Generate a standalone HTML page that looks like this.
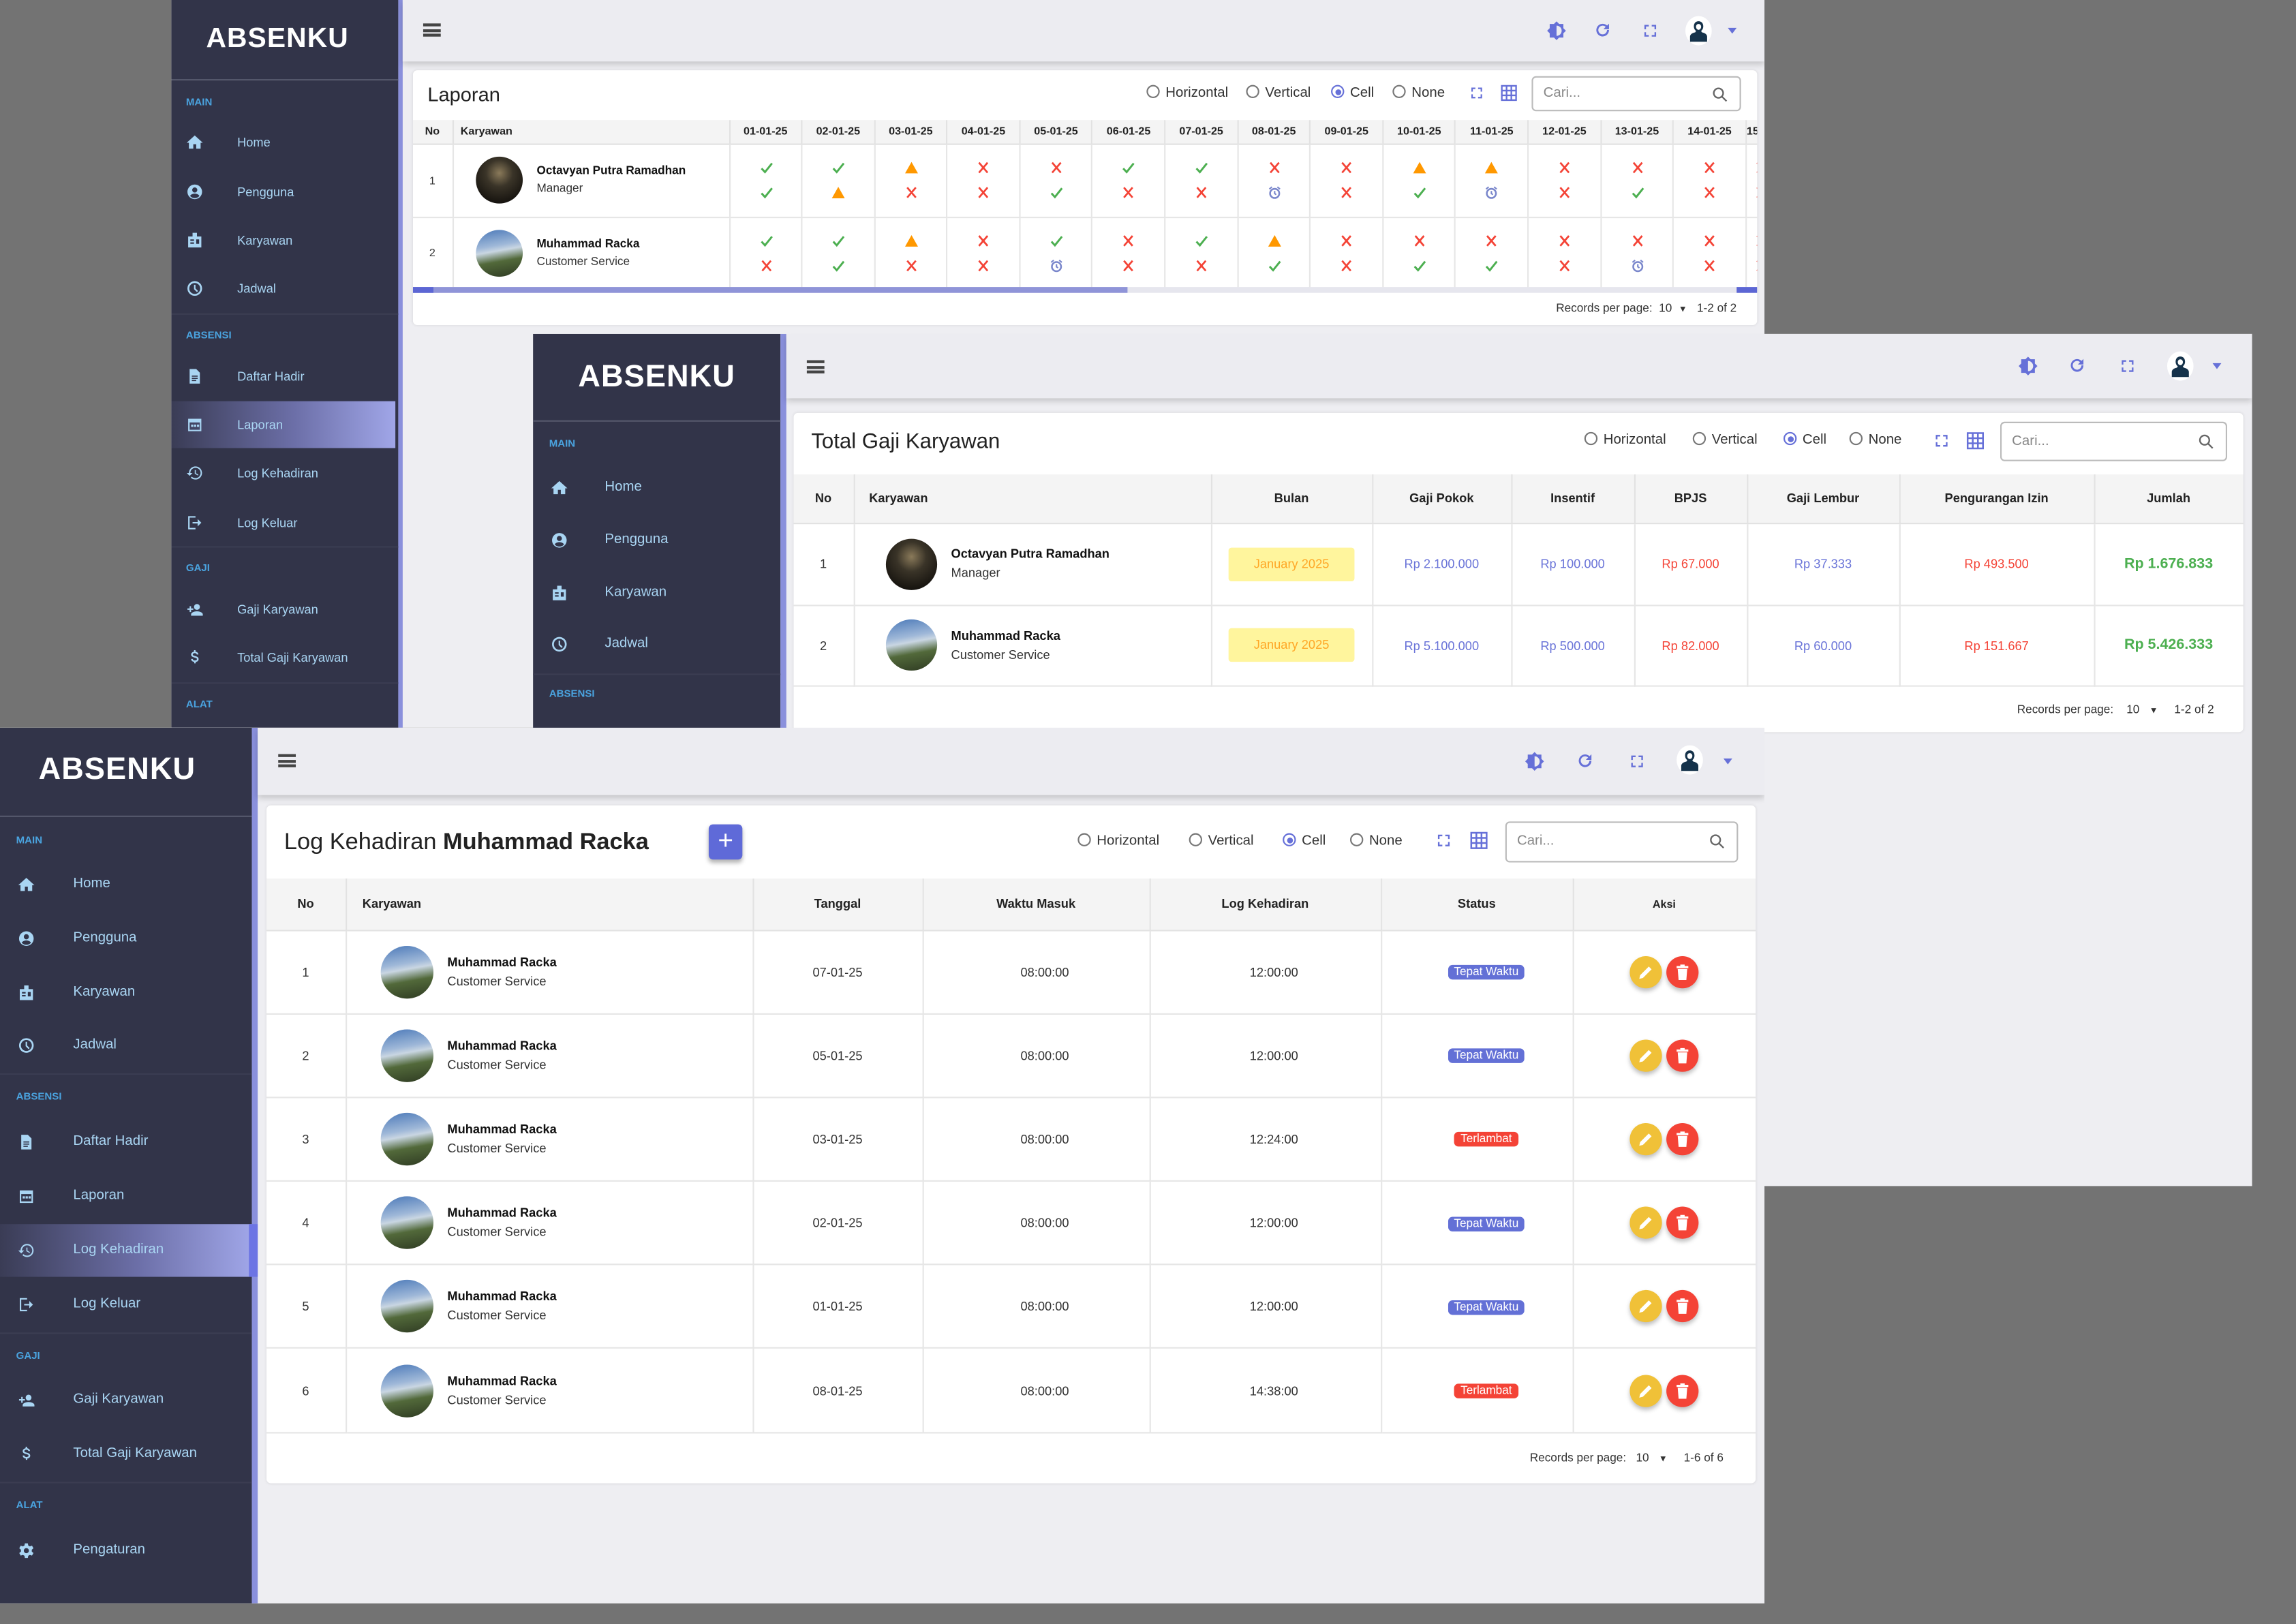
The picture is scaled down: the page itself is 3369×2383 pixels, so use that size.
<!DOCTYPE html>
<html><head><meta charset="utf-8">
<style>
*{box-sizing:border-box;margin:0;padding:0}
html,body{width:3369px;height:2382px;overflow:hidden;background:#737373}
#w{position:absolute;left:0;top:0;width:1568px;height:1109px;transform:scale(2.14860);transform-origin:0 0;font-family:"Liberation Sans",sans-serif;color:#222}
.scr{position:absolute;overflow:hidden;background:#eeeef2}
.sb{position:absolute;left:0;top:0;bottom:0;background:#323449}
.sbb{position:absolute;top:0;bottom:0;width:4px;background:#8a90dc}
.logo{position:absolute;left:0;text-align:center;color:#fff;font-weight:bold;letter-spacing:.5px}
.dv{position:absolute;left:0;height:1px;background:#55586c}
.sec{position:absolute;color:#4aa3df;font-size:7px;font-weight:bold}
.it{position:absolute;left:0;height:16px;line-height:16px;color:#a9d5f3;white-space:nowrap}
.it svg{position:absolute;top:2px;width:12px;height:12px;fill:#a9d5f3}
.act{position:absolute;left:0;background:linear-gradient(90deg,#3a3c55,#6c6fa8 55%,#a0a6e8)}
.tb{position:absolute;top:0;right:0;background:#ececf1;box-shadow:0 2px 4px rgba(0,0,0,.18)}
.hb{position:absolute;width:12px;height:9px;border-top:2px solid #444;border-bottom:2px solid #444}
.hb:after{content:"";position:absolute;left:0;right:0;top:1.5px;height:2px;background:#444}
.ic{position:absolute;width:14px;height:14px;fill:#6670d8;color:#6670d8}
.av{position:absolute;width:18px;height:20px;border-radius:50%;background:#fff;overflow:hidden}
.car{position:absolute;width:0;height:0;border-left:3.5px solid transparent;border-right:3.5px solid transparent;border-top:4px solid #6670d8}
.card{position:absolute;background:#fff;border-radius:3px;overflow:hidden;box-shadow:0 0 2px rgba(0,0,0,.1)}
.ttl{position:absolute;color:#222;white-space:nowrap}
.rd{position:absolute;font-size:9.5px;color:#333;white-space:nowrap;line-height:12px}
.rd b{display:inline-block;width:9px;height:9px;border:1px solid #777;border-radius:50%;vertical-align:-1px;margin-right:4px;position:relative}
.rd b.on{border-color:#6670d8}
.rd b.on:after{content:"";position:absolute;left:1.5px;top:1.5px;width:4px;height:4px;border-radius:50%;background:#6670d8}
.srch{position:absolute;border:1px solid #bbb;border-radius:3px;font-size:9.5px;color:#888;padding-left:7px}
.srch svg{position:absolute;right:8px;width:11px;height:11px;fill:none;stroke:#666;stroke-width:2.4}
table{position:absolute;left:0;border-collapse:collapse;table-layout:fixed}
th{background:#f4f4f4;font-weight:bold;color:#222;border:1px solid #e2e2e2;border-top:none;white-space:nowrap;overflow:hidden}
td{border:1px solid #e6e6e6;white-space:nowrap;overflow:hidden;color:#333}
tr>*:first-child{border-left:none}
.emp{display:flex;align-items:center}
.pic{border-radius:50%;flex:none}
.p1{background:radial-gradient(circle at 50% 35%,#8a7a5a 0,#3a3428 35%,#15120e 80%)}
.p2{background:linear-gradient(170deg,#4a78b8 0,#9fb8d8 35%,#c9d6e2 45%,#52693a 65%,#2e3a22 100%)}
.nm{font-weight:bold;color:#111}
.ft{position:absolute;right:14px;font-size:8px;color:#333;white-space:nowrap}
.m{display:block;height:17px;line-height:17px;text-align:center}
.ylw{display:inline-block;background:#fff59d;color:#ffa726;border-radius:2px;width:86px;height:23px;line-height:23px;text-align:center;font-size:8.5px}
.bd{display:inline-block;color:#fff;border-radius:3px;font-size:8px;padding:0 4px;line-height:10px}
.btn{display:inline-block;width:22px;height:22px;border-radius:50%;vertical-align:middle;box-shadow:0 2px 3px rgba(0,0,0,.25);position:relative}
.btn svg{position:absolute;left:5px;top:5px;width:12px;height:12px;fill:#fff}
</style></head><body><div id="w">
<svg width="0" height="0" style="position:absolute">
<defs>
<symbol id="home" viewBox="0 0 24 24"><path d="M12 3L1 13h3v8h6v-6h4v6h6v-8h3z"/></symbol>
<symbol id="user" viewBox="0 0 24 24"><path fill-rule="evenodd" d="M12 2a10 10 0 100 20 10 10 0 000-20zm0 4a3.5 3.5 0 110 7 3.5 3.5 0 010-7zm0 14.5a8.5 8.5 0 01-6.3-2.8c.6-2 4-3.2 6.3-3.2s5.7 1.2 6.3 3.2a8.5 8.5 0 01-6.3 2.8z"/></symbol>
<symbol id="badge" viewBox="0 0 24 24"><path fill-rule="evenodd" d="M9 2h6v5h6v15H3V7h6zM6 11h5v2H6zm0 4h5v2H6zm8-4h4v6h-4z"/></symbol>
<symbol id="clock" viewBox="0 0 24 24"><path fill-rule="evenodd" d="M12 2a10 10 0 100 20 10 10 0 000-20zm0 2.5a7.5 7.5 0 110 15 7.5 7.5 0 010-15zM11 7h2v5l3.5 3.5-1.5 1.5-4-4z"/></symbol>
<symbol id="doc" viewBox="0 0 24 24"><path fill-rule="evenodd" d="M5 2h9l5 5v15H5zm3 9h8v1.5H8zm0 3h8v1.5H8zm0 3h6v1.5H8z"/></symbol>
<symbol id="cal" viewBox="0 0 24 24"><path fill-rule="evenodd" d="M3 4h18v17H3zm2 5v10h14V9zm2 3h3v3H7zm4 0h3v3h-3zm4 0h3v3h-3z"/></symbol>
<symbol id="hist" viewBox="0 0 24 24"><path d="M13 3a9 9 0 00-9 9H1l4 4 4-4H6a7 7 0 117 7 7 7 0 01-5-2l-1.4 1.4A9 9 0 1013 3zm-1 5v5l4.3 2.5.7-1.2-3.5-2.1V8z"/></symbol>
<symbol id="out" viewBox="0 0 24 24"><path d="M3 3h10v2H5v14h8v2H3zm13 4l5 5-5 5v-4H9v-2h7z"/></symbol>
<symbol id="uadd" viewBox="0 0 24 24"><path d="M15 5a4 4 0 110 8 4 4 0 010-8zm0 10c3 0 8 1.5 8 4v2H7v-2c0-2.5 5-4 8-4zM5 8h2v3h3v2H7v3H5v-3H2v-2h3z"/></symbol>
<symbol id="dol" viewBox="0 0 24 24"><path d="M11 2h2v2.1c2.3.3 4 1.8 4 3.9h-2.3c0-1.1-1.2-1.900-2.7-1.9s-2.7.8-2.7 1.9c0 1.2 1 1.6 3.3 2.2 2.8.7 4.7 1.6 4.7 4.2 0 2.1-1.7 3.4-4 3.8V20h-2v-1.9c-2.4-.3-4.3-1.8-4.3-4.1h2.3c0 1.3 1.3 2.1 3 2.1s2.7-.7 2.7-1.800c0-1.2-1-1.6-3.4-2.2C8.9 11.4 7 10.5 7 8c0-2 1.7-3.5 4-3.9z"/></symbol>
<symbol id="gear" viewBox="0 0 24 24"><path fill-rule="evenodd" d="M10 2h4l.6 3 2.2 1.2 2.9-1 2 3.5-2.3 2v2.6l2.3 2-2 3.5-2.9-1-2.2 1.2L14 22h-4l-.6-3-2.2-1.2-2.9 1-2-3.5 2.3-2v-2.6l-2.3-2 2-3.5 2.9 1L9.4 5zM12 8.5a3.5 3.5 0 100 7 3.5 3.5 0 000-7z"/></symbol>
<symbol id="bright" viewBox="0 0 24 24"><path d="M12 1l3 3h5v5l3 3-3 3v5h-5l-3 3-3-3H4v-5l-3-3 3-3V4h5zm0 5v12a6 6 0 000-12z"/></symbol>
<symbol id="ref" viewBox="0 0 24 24"><path d="M17.6 6.4A8 8 0 1020 12h-2.5a5.5 5.5 0 11-1.7-4L13 11h7V4z"/></symbol>
<symbol id="fs" viewBox="0 0 24 24"><path d="M4 4h6v2.2H6.2V10H4zm10 0h6v6h-2.2V6.2H14zM4 14h2.2v3.8H10V20H4zm13.8 0H20v6h-6v-2.2h3.8z"/></symbol>
<symbol id="grid" viewBox="0 0 24 24"><path fill-rule="evenodd" d="M2 2h20v20H2zm2 2v4h4V4zm6 0v4h4V4zm6 0v4h4V4zM4 10v4h4v-4zm6 0v4h4v-4zm6 0v4h4v-4zM4 16v4h4v-4zm6 0v4h4v-4zm6 0v4h4v-4z"/></symbol>
<symbol id="usr" viewBox="0 0 24 28"><path d="M12 2c-3.5 0-5.5 2.6-5.5 6 0 2.4 1 4.3 2.6 5.4L8 15c-3.5.6-6 2.6-6 5v6h20v-6c0-2.4-2.5-4.4-6-5l-1.1-1.6C16.5 12.3 17.5 10.4 17.5 8c0-3.4-2-6-5.5-6z" fill="#15324a"/><path d="M9 8.5c0-2 1.4-3.3 3-3.3s3 1.3 3 3.3-1.4 3.6-3 3.6-3-1.6-3-3.6z" fill="#fff"/></symbol>
<symbol id="x" viewBox="0 0 10 10"><path d="M2 1.5l6 7M8 1.5l-6 7" stroke="#f44336" stroke-width="1.3" fill="none"/></symbol>
<symbol id="v" viewBox="0 0 10 10"><path d="M1.5 5.5l2.4 2.6L8.8 2" stroke="#4caf50" stroke-width="1.4" fill="none"/></symbol>
<symbol id="wn" viewBox="0 0 10 10"><path d="M5 1L9.5 9H.5z" fill="#ff9800"/></symbol>
<symbol id="a" viewBox="0 0 10 10"><circle cx="5" cy="5.6" r="3.2" fill="none" stroke="#7986cb" stroke-width="1.2"/><path d="M5 3.9v1.8l1.1.8M1.3 2.6l1.8-1.5M8.7 2.6L6.9 1.1" stroke="#7986cb" stroke-width="1" fill="none"/></symbol>
<symbol id="srch" viewBox="0 0 24 24"><circle cx="10" cy="10" r="7"/><path d="M15 15l7 7"/></symbol>
<symbol id="pen" viewBox="0 0 24 24"><path d="M3 21l1.2-5L16 4.2l3.8 3.8L8 19.8z"/></symbol>
<symbol id="trash" viewBox="0 0 24 24"><path d="M4 3.5h16v3H4zM9 1.5h6v2H9zM5.5 7.5h13l-1.2 15H6.7z"/></symbol>
</defs></svg>

<!-- ================= SCREEN A ================= -->
<div class="scr" style="left:117px;top:0;width:1088px;height:497px">
 <div class="sb" style="width:155px"></div>
 <div class="sbb" style="left:155px;width:3px"></div>
 <div class="logo" style="width:145px;top:14px;font-size:19px;line-height:26px">ABSENKU</div>
 <div class="dv" style="top:54px;width:155px"></div>
 <div class="sec" style="left:10px;top:67px">MAIN</div>
 <div class="act" style="top:274px;width:153px;height:32px"></div>
 <div style="font-size:8.5px">
 <div class="it" style="top:89px"><svg style="left:10px"><use href="#home"/></svg><span style="position:absolute;left:45px">Home</span></div>
 <div class="it" style="top:123px"><svg style="left:10px"><use href="#user"/></svg><span style="position:absolute;left:45px">Pengguna</span></div>
 <div class="it" style="top:156px"><svg style="left:10px"><use href="#badge"/></svg><span style="position:absolute;left:45px">Karyawan</span></div>
 <div class="it" style="top:189px"><svg style="left:10px"><use href="#clock"/></svg><span style="position:absolute;left:45px">Jadwal</span></div>
 <div class="it" style="top:249px"><svg style="left:10px"><use href="#doc"/></svg><span style="position:absolute;left:45px">Daftar Hadir</span></div>
 <div class="it" style="top:282px"><svg style="left:10px"><use href="#cal"/></svg><span style="position:absolute;left:45px">Laporan</span></div>
 <div class="it" style="top:315px"><svg style="left:10px"><use href="#hist"/></svg><span style="position:absolute;left:45px">Log Kehadiran</span></div>
 <div class="it" style="top:349px"><svg style="left:10px"><use href="#out"/></svg><span style="position:absolute;left:45px">Log Keluar</span></div>
 <div class="it" style="top:408px"><svg style="left:10px"><use href="#uadd"/></svg><span style="position:absolute;left:45px">Gaji Karyawan</span></div>
 <div class="it" style="top:441px"><svg style="left:10px"><use href="#dol"/></svg><span style="position:absolute;left:45px">Total Gaji Karyawan</span></div>
 </div>
 <div class="dv" style="top:214px;width:155px;background:#3b3d52"></div>
 <div class="sec" style="left:10px;top:226px">ABSENSI</div>
 <div class="dv" style="top:373px;width:155px;background:#3b3d52"></div>
 <div class="sec" style="left:10px;top:385px">GAJI</div>
 <div class="dv" style="top:466px;width:155px;background:#3b3d52"></div>
 <div class="sec" style="left:10px;top:478px">ALAT</div>

 <div class="tb" style="left:158px;height:42px"></div>
 <div class="hb" style="left:172px;top:16px"></div>
 <svg class="ic" style="left:939px;top:14px"><use href="#bright"/></svg>
 <svg class="ic" style="left:971px;top:14px;width:13px;height:13px"><use href="#ref"/></svg>
 <svg class="ic" style="left:1004px;top:15px;width:12px;height:12px"><use href="#fs"/></svg>
 <div class="av" style="left:1034px;top:11px"><svg style="position:absolute;left:2px;top:2px;width:14px;height:17px"><use href="#usr"/></svg></div>
 <div class="car" style="left:1063px;top:19px"></div>

 <div class="card" style="left:165px;top:48px;width:918px;height:174px">
  <div class="ttl" style="left:10px;top:9px;font-size:13.5px">Laporan</div>
  <div class="rd" style="left:501px;top:10px"><b></b>Horizontal</div>
  <div class="rd" style="left:569px;top:10px"><b></b>Vertical</div>
  <div class="rd" style="left:627px;top:10px"><b class="on"></b>Cell</div>
  <div class="rd" style="left:669px;top:10px"><b></b>None</div>
  <svg class="ic" style="left:721px;top:10px;width:11px;height:11px"><use href="#fs"/></svg>
  <svg class="ic" style="left:742px;top:9px;width:13px;height:13px"><use href="#grid"/></svg>
  <div class="srch" style="left:764px;top:4px;width:143px;height:24px;line-height:22px">Cari...<svg style="top:6px"><use href="#srch"/></svg></div>
  <table style="top:34px;width:1000px;font-size:7.5px">
   <colgroup><col style="width:27px"><col style="width:189px"><col span="16" style="width:49.6px"></colgroup>
   <tr style="height:16px"><th>No</th><th style="text-align:left;padding-left:5px">Karyawan</th><th>01-01-25</th><th>02-01-25</th><th>03-01-25</th><th>04-01-25</th><th>05-01-25</th><th>06-01-25</th><th>07-01-25</th><th>08-01-25</th><th>09-01-25</th><th>10-01-25</th><th>11-01-25</th><th>12-01-25</th><th>13-01-25</th><th>14-01-25</th><th style="text-align:left">15-01-25</th><th></th></tr>
   <tr style="height:50px"><td style="text-align:center">1</td><td><div class="emp" style="padding-left:15px"><div class="pic p1" style="width:32px;height:32px"></div><div style="margin-left:10px;line-height:12px"><div class="nm" style="font-size:8px">Octavyan Putra Ramadhan</div><div style="font-size:8px">Manager</div></div></div></td>
    <td><svg class="m" width="49" height="17" viewBox="-20 -3 50 16"><use href="#v" width="10" height="10"/></svg><svg class="m" width="49" height="17" viewBox="-20 -3 50 16"><use href="#v" width="10" height="10"/></svg></td>
    <td><svg class="m" width="49" height="17" viewBox="-20 -3 50 16"><use href="#v" width="10" height="10"/></svg><svg class="m" width="49" height="17" viewBox="-20 -3 50 16"><use href="#wn" width="10" height="10"/></svg></td>
    <td><svg class="m" width="49" height="17" viewBox="-20 -3 50 16"><use href="#wn" width="10" height="10"/></svg><svg class="m" width="49" height="17" viewBox="-20 -3 50 16"><use href="#x" width="10" height="10"/></svg></td>
    <td><svg class="m" width="49" height="17" viewBox="-20 -3 50 16"><use href="#x" width="10" height="10"/></svg><svg class="m" width="49" height="17" viewBox="-20 -3 50 16"><use href="#x" width="10" height="10"/></svg></td>
    <td><svg class="m" width="49" height="17" viewBox="-20 -3 50 16"><use href="#x" width="10" height="10"/></svg><svg class="m" width="49" height="17" viewBox="-20 -3 50 16"><use href="#v" width="10" height="10"/></svg></td>
    <td><svg class="m" width="49" height="17" viewBox="-20 -3 50 16"><use href="#v" width="10" height="10"/></svg><svg class="m" width="49" height="17" viewBox="-20 -3 50 16"><use href="#x" width="10" height="10"/></svg></td>
    <td><svg class="m" width="49" height="17" viewBox="-20 -3 50 16"><use href="#v" width="10" height="10"/></svg><svg class="m" width="49" height="17" viewBox="-20 -3 50 16"><use href="#x" width="10" height="10"/></svg></td>
    <td><svg class="m" width="49" height="17" viewBox="-20 -3 50 16"><use href="#x" width="10" height="10"/></svg><svg class="m" width="49" height="17" viewBox="-20 -3 50 16"><use href="#a" width="10" height="10"/></svg></td>
    <td><svg class="m" width="49" height="17" viewBox="-20 -3 50 16"><use href="#x" width="10" height="10"/></svg><svg class="m" width="49" height="17" viewBox="-20 -3 50 16"><use href="#x" width="10" height="10"/></svg></td>
    <td><svg class="m" width="49" height="17" viewBox="-20 -3 50 16"><use href="#wn" width="10" height="10"/></svg><svg class="m" width="49" height="17" viewBox="-20 -3 50 16"><use href="#v" width="10" height="10"/></svg></td>
    <td><svg class="m" width="49" height="17" viewBox="-20 -3 50 16"><use href="#wn" width="10" height="10"/></svg><svg class="m" width="49" height="17" viewBox="-20 -3 50 16"><use href="#a" width="10" height="10"/></svg></td>
    <td><svg class="m" width="49" height="17" viewBox="-20 -3 50 16"><use href="#x" width="10" height="10"/></svg><svg class="m" width="49" height="17" viewBox="-20 -3 50 16"><use href="#x" width="10" height="10"/></svg></td>
    <td><svg class="m" width="49" height="17" viewBox="-20 -3 50 16"><use href="#x" width="10" height="10"/></svg><svg class="m" width="49" height="17" viewBox="-20 -3 50 16"><use href="#v" width="10" height="10"/></svg></td>
    <td><svg class="m" width="49" height="17" viewBox="-20 -3 50 16"><use href="#x" width="10" height="10"/></svg><svg class="m" width="49" height="17" viewBox="-20 -3 50 16"><use href="#x" width="10" height="10"/></svg></td>
    <td><svg class="m" width="20" height="17" viewBox="-5 -3 20 16"><use href="#x" width="10" height="10"/></svg><svg class="m" width="20" height="17" viewBox="-5 -3 20 16"><use href="#x" width="10" height="10"/></svg></td><td></td></tr>
   <tr style="height:49px"><td style="text-align:center">2</td><td><div class="emp" style="padding-left:15px"><div class="pic p2" style="width:32px;height:32px"></div><div style="margin-left:10px;line-height:12px"><div class="nm" style="font-size:8px">Muhammad Racka</div><div style="font-size:8px">Customer Service</div></div></div></td>
    <td><svg class="m" width="49" height="17" viewBox="-20 -3 50 16"><use href="#v" width="10" height="10"/></svg><svg class="m" width="49" height="17" viewBox="-20 -3 50 16"><use href="#x" width="10" height="10"/></svg></td>
    <td><svg class="m" width="49" height="17" viewBox="-20 -3 50 16"><use href="#v" width="10" height="10"/></svg><svg class="m" width="49" height="17" viewBox="-20 -3 50 16"><use href="#v" width="10" height="10"/></svg></td>
    <td><svg class="m" width="49" height="17" viewBox="-20 -3 50 16"><use href="#wn" width="10" height="10"/></svg><svg class="m" width="49" height="17" viewBox="-20 -3 50 16"><use href="#x" width="10" height="10"/></svg></td>
    <td><svg class="m" width="49" height="17" viewBox="-20 -3 50 16"><use href="#x" width="10" height="10"/></svg><svg class="m" width="49" height="17" viewBox="-20 -3 50 16"><use href="#x" width="10" height="10"/></svg></td>
    <td><svg class="m" width="49" height="17" viewBox="-20 -3 50 16"><use href="#v" width="10" height="10"/></svg><svg class="m" width="49" height="17" viewBox="-20 -3 50 16"><use href="#a" width="10" height="10"/></svg></td>
    <td><svg class="m" width="49" height="17" viewBox="-20 -3 50 16"><use href="#x" width="10" height="10"/></svg><svg class="m" width="49" height="17" viewBox="-20 -3 50 16"><use href="#x" width="10" height="10"/></svg></td>
    <td><svg class="m" width="49" height="17" viewBox="-20 -3 50 16"><use href="#v" width="10" height="10"/></svg><svg class="m" width="49" height="17" viewBox="-20 -3 50 16"><use href="#x" width="10" height="10"/></svg></td>
    <td><svg class="m" width="49" height="17" viewBox="-20 -3 50 16"><use href="#wn" width="10" height="10"/></svg><svg class="m" width="49" height="17" viewBox="-20 -3 50 16"><use href="#v" width="10" height="10"/></svg></td>
    <td><svg class="m" width="49" height="17" viewBox="-20 -3 50 16"><use href="#x" width="10" height="10"/></svg><svg class="m" width="49" height="17" viewBox="-20 -3 50 16"><use href="#x" width="10" height="10"/></svg></td>
    <td><svg class="m" width="49" height="17" viewBox="-20 -3 50 16"><use href="#x" width="10" height="10"/></svg><svg class="m" width="49" height="17" viewBox="-20 -3 50 16"><use href="#v" width="10" height="10"/></svg></td>
    <td><svg class="m" width="49" height="17" viewBox="-20 -3 50 16"><use href="#x" width="10" height="10"/></svg><svg class="m" width="49" height="17" viewBox="-20 -3 50 16"><use href="#v" width="10" height="10"/></svg></td>
    <td><svg class="m" width="49" height="17" viewBox="-20 -3 50 16"><use href="#x" width="10" height="10"/></svg><svg class="m" width="49" height="17" viewBox="-20 -3 50 16"><use href="#x" width="10" height="10"/></svg></td>
    <td><svg class="m" width="49" height="17" viewBox="-20 -3 50 16"><use href="#x" width="10" height="10"/></svg><svg class="m" width="49" height="17" viewBox="-20 -3 50 16"><use href="#a" width="10" height="10"/></svg></td>
    <td><svg class="m" width="49" height="17" viewBox="-20 -3 50 16"><use href="#x" width="10" height="10"/></svg><svg class="m" width="49" height="17" viewBox="-20 -3 50 16"><use href="#x" width="10" height="10"/></svg></td>
    <td><svg class="m" width="20" height="17" viewBox="-5 -3 20 16"><use href="#x" width="10" height="10"/></svg><svg class="m" width="20" height="17" viewBox="-5 -3 20 16"><use href="#x" width="10" height="10"/></svg></td><td></td></tr>
  </table>
  <div style="position:absolute;left:0;top:148px;width:918px;height:4px;background:#e6e6ee"></div>
  <div style="position:absolute;left:0;top:148px;width:488px;height:4px;background:#8f94d8"></div>
  <div style="position:absolute;left:0;top:148px;width:14px;height:4px;background:#5c66d4"></div>
  <div style="position:absolute;left:904px;top:148px;width:14px;height:4px;background:#5c66d4"></div>
  <div class="ft" style="top:158px">Records per page:&nbsp;&nbsp;10&nbsp;&nbsp;<span style="font-size:6px">▼</span>&nbsp;&nbsp;&nbsp;1-2 of 2</div>
 </div>
</div>

<!-- ================= SCREEN B ================= -->
<div class="scr" style="left:364px;top:228px;width:1174px;height:582px">
 <div class="sb" style="width:169px"></div>
 <div class="sbb" style="left:169px"></div>
 <div class="logo" style="width:169px;top:16px;font-size:21px;line-height:28px">ABSENKU</div>
 <div class="dv" style="top:59px;width:169px"></div>
 <div class="sec" style="left:11px;top:72px">MAIN</div>
 <div style="font-size:9.5px">
 <div class="it" style="top:97px"><svg style="left:12px"><use href="#home"/></svg><span style="position:absolute;left:49px">Home</span></div>
 <div class="it" style="top:133px"><svg style="left:12px"><use href="#user"/></svg><span style="position:absolute;left:49px">Pengguna</span></div>
 <div class="it" style="top:169px"><svg style="left:12px"><use href="#badge"/></svg><span style="position:absolute;left:49px">Karyawan</span></div>
 <div class="it" style="top:204px"><svg style="left:12px"><use href="#clock"/></svg><span style="position:absolute;left:49px">Jadwal</span></div>
 </div>
 <div class="dv" style="top:232px;width:169px;background:#3b3d52"></div>
 <div class="sec" style="left:11px;top:243px">ABSENSI</div>

 <div class="tb" style="left:173px;height:44px"></div>
 <div class="hb" style="left:187px;top:18px"></div>
 <svg class="ic" style="left:1014px;top:15px"><use href="#bright"/></svg>
 <svg class="ic" style="left:1048px;top:15px;width:13px;height:13px"><use href="#ref"/></svg>
 <svg class="ic" style="left:1083px;top:16px;width:12px;height:12px"><use href="#fs"/></svg>
 <div class="av" style="left:1116px;top:12px"><svg style="position:absolute;left:2px;top:2px;width:14px;height:17px"><use href="#usr"/></svg></div>
 <div class="car" style="left:1147px;top:20px"></div>

 <div class="card" style="left:178px;top:54px;width:990px;height:218px">
  <div class="ttl" style="left:12px;top:12px;font-size:14.5px">Total Gaji Karyawan</div>
  <div class="rd" style="left:540px;top:13px"><b></b>Horizontal</div>
  <div class="rd" style="left:614px;top:13px"><b></b>Vertical</div>
  <div class="rd" style="left:676px;top:13px"><b class="on"></b>Cell</div>
  <div class="rd" style="left:721px;top:13px"><b></b>None</div>
  <svg class="ic" style="left:778px;top:13px;width:12px;height:12px"><use href="#fs"/></svg>
  <svg class="ic" style="left:800px;top:12px;width:14px;height:14px"><use href="#grid"/></svg>
  <div class="srch" style="left:824px;top:6px;width:155px;height:27px;line-height:25px">Cari...<svg style="top:7px"><use href="#srch"/></svg></div>
  <table style="top:42px;width:990px;font-size:8.5px">
   <colgroup><col style="width:41px"><col style="width:244px"><col style="width:110px"><col style="width:95px"><col style="width:84px"><col style="width:77px"><col style="width:104px"><col style="width:133px"><col style="width:102px"></colgroup>
   <tr style="height:33px"><th>No</th><th style="text-align:left;padding-left:10px">Karyawan</th><th>Bulan</th><th>Gaji Pokok</th><th>Insentif</th><th>BPJS</th><th>Gaji Lembur</th><th>Pengurangan Izin</th><th>Jumlah</th></tr>
   <tr style="height:56px;text-align:center"><td>1</td><td style="text-align:left"><div class="emp" style="padding-left:21px"><div class="pic p1" style="width:35px;height:35px"></div><div style="margin-left:10px;line-height:13px"><div class="nm" style="font-size:8.5px">Octavyan Putra Ramadhan</div><div style="font-size:8.5px">Manager</div></div></div></td>
    <td><span class="ylw">January 2025</span></td><td style="color:#6a74d8">Rp 2.100.000</td><td style="color:#6a74d8">Rp 100.000</td><td style="color:#f44336">Rp 67.000</td><td style="color:#6a74d8">Rp 37.333</td><td style="color:#f44336">Rp 493.500</td><td style="color:#4caf50;font-weight:bold;font-size:10px">Rp 1.676.833</td></tr>
   <tr style="height:55px;text-align:center"><td>2</td><td style="text-align:left"><div class="emp" style="padding-left:21px"><div class="pic p2" style="width:35px;height:35px"></div><div style="margin-left:10px;line-height:13px"><div class="nm" style="font-size:8.5px">Muhammad Racka</div><div style="font-size:8.5px">Customer Service</div></div></div></td>
    <td><span class="ylw">January 2025</span></td><td style="color:#6a74d8">Rp 5.100.000</td><td style="color:#6a74d8">Rp 500.000</td><td style="color:#f44336">Rp 82.000</td><td style="color:#6a74d8">Rp 60.000</td><td style="color:#f44336">Rp 151.667</td><td style="color:#4caf50;font-weight:bold;font-size:10px">Rp 5.426.333</td></tr>
  </table>
  <div class="ft" style="top:198px;right:20px">Records per page:&nbsp;&nbsp;&nbsp;&nbsp;10&nbsp;&nbsp;&nbsp;<span style="font-size:6px">▼</span>&nbsp;&nbsp;&nbsp;&nbsp;&nbsp;1-2 of 2</div>
 </div>
</div>

<!-- ================= SCREEN C ================= -->
<div class="scr" style="left:0;top:497px;width:1205px;height:598px">
 <div class="sb" style="width:172px"></div>
 <div class="sbb" style="left:172px"></div>
 <div class="logo" style="width:160px;top:15px;font-size:21px;line-height:28px">ABSENKU</div>
 <div class="dv" style="top:60px;width:172px"></div>
 <div class="sec" style="left:11px;top:74px">MAIN</div>
 <div class="act" style="top:339px;width:172px;height:36px"></div>
 <div style="position:absolute;left:170px;top:339px;width:6px;height:36px;background:#6c74e4"></div>
 <div style="font-size:9.5px">
 <div class="it" style="top:99px"><svg style="left:12px"><use href="#home"/></svg><span style="position:absolute;left:50px">Home</span></div>
 <div class="it" style="top:136px"><svg style="left:12px"><use href="#user"/></svg><span style="position:absolute;left:50px">Pengguna</span></div>
 <div class="it" style="top:173px"><svg style="left:12px"><use href="#badge"/></svg><span style="position:absolute;left:50px">Karyawan</span></div>
 <div class="it" style="top:209px"><svg style="left:12px"><use href="#clock"/></svg><span style="position:absolute;left:50px">Jadwal</span></div>
 <div class="it" style="top:275px"><svg style="left:12px"><use href="#doc"/></svg><span style="position:absolute;left:50px">Daftar Hadir</span></div>
 <div class="it" style="top:312px"><svg style="left:12px"><use href="#cal"/></svg><span style="position:absolute;left:50px">Laporan</span></div>
 <div class="it" style="top:349px"><svg style="left:12px"><use href="#hist"/></svg><span style="position:absolute;left:50px">Log Kehadiran</span></div>
 <div class="it" style="top:386px"><svg style="left:12px"><use href="#out"/></svg><span style="position:absolute;left:50px">Log Keluar</span></div>
 <div class="it" style="top:451px"><svg style="left:12px"><use href="#uadd"/></svg><span style="position:absolute;left:50px">Gaji Karyawan</span></div>
 <div class="it" style="top:488px"><svg style="left:12px"><use href="#dol"/></svg><span style="position:absolute;left:50px">Total Gaji Karyawan</span></div>
 <div class="it" style="top:554px"><svg style="left:12px"><use href="#gear"/></svg><span style="position:absolute;left:50px">Pengaturan</span></div>
 </div>
 <div class="dv" style="top:236px;width:172px;background:#3b3d52"></div>
 <div class="sec" style="left:11px;top:249px">ABSENSI</div>
 <div class="dv" style="top:413px;width:172px;background:#3b3d52"></div>
 <div class="sec" style="left:11px;top:426px">GAJI</div>
 <div class="dv" style="top:515px;width:172px;background:#3b3d52"></div>
 <div class="sec" style="left:11px;top:528px">ALAT</div>

 <div class="tb" style="left:176px;height:46px"></div>
 <div class="hb" style="left:190px;top:18px"></div>
 <svg class="ic" style="left:1041px;top:16px"><use href="#bright"/></svg>
 <svg class="ic" style="left:1076px;top:16px;width:13px;height:13px"><use href="#ref"/></svg>
 <svg class="ic" style="left:1112px;top:17px;width:12px;height:12px"><use href="#fs"/></svg>
 <div class="av" style="left:1145px;top:12px"><svg style="position:absolute;left:2px;top:2px;width:14px;height:17px"><use href="#usr"/></svg></div>
 <div class="car" style="left:1177px;top:21px"></div>

 <div class="card" style="left:182px;top:53px;width:1017px;height:463px">
  <div class="ttl" style="left:12px;top:17px;font-size:16px">Log Kehadiran <b>Muhammad Racka</b></div>
  <div style="position:absolute;left:302px;top:13px;width:23px;height:24px;background:#5f6ad8;border-radius:3px;box-shadow:0 2px 3px rgba(0,0,0,.3);color:#fff;text-align:center;font-size:18px;line-height:23px">+</div>
  <div class="rd" style="left:554px;top:19px"><b></b>Horizontal</div>
  <div class="rd" style="left:630px;top:19px"><b></b>Vertical</div>
  <div class="rd" style="left:694px;top:19px"><b class="on"></b>Cell</div>
  <div class="rd" style="left:740px;top:19px"><b></b>None</div>
  <svg class="ic" style="left:798px;top:18px;width:12px;height:12px"><use href="#fs"/></svg>
  <svg class="ic" style="left:821px;top:17px;width:14px;height:14px"><use href="#grid"/></svg>
  <div class="srch" style="left:846px;top:11px;width:159px;height:28px;line-height:26px">Cari...<svg style="top:7px"><use href="#srch"/></svg></div>
  <table style="top:50px;width:1017px;font-size:8.5px;text-align:center">
   <colgroup><col style="width:54px"><col style="width:278px"><col style="width:116px"><col style="width:155px"><col style="width:158px"><col style="width:131px"><col style="width:125px"></colgroup>
   <tr style="height:35px"><th>No</th><th style="text-align:left;padding-left:11px">Karyawan</th><th>Tanggal</th><th>Waktu Masuk</th><th>Log Kehadiran</th><th>Status</th><th style="font-size:7.5px">Aksi</th></tr>
   <tr style="height:57.2px"><td>1</td><td style="text-align:left"><div class="emp" style="padding-left:23px"><div class="pic p2" style="width:36px;height:36px"></div><div style="margin-left:10px;line-height:13px"><div class="nm" style="font-size:8.5px">Muhammad Racka</div><div style="font-size:8.5px">Customer Service</div></div></div></td><td>07-01-25</td><td style="padding-left:12px">08:00:00</td><td style="padding-left:12px">12:00:00</td><td style="padding-left:13px"><span class="bd" style="background:#6370d6">Tepat Waktu</span></td><td><span class="btn" style="background:#f0c138"><svg viewBox="0 0 24 24"><use href="#pen"/></svg></span> <span class="btn" style="background:#f44336"><svg viewBox="0 0 24 24"><use href="#trash"/></svg></span></td></tr>
   <tr style="height:57.2px"><td>2</td><td style="text-align:left"><div class="emp" style="padding-left:23px"><div class="pic p2" style="width:36px;height:36px"></div><div style="margin-left:10px;line-height:13px"><div class="nm" style="font-size:8.5px">Muhammad Racka</div><div style="font-size:8.5px">Customer Service</div></div></div></td><td>05-01-25</td><td style="padding-left:12px">08:00:00</td><td style="padding-left:12px">12:00:00</td><td style="padding-left:13px"><span class="bd" style="background:#6370d6">Tepat Waktu</span></td><td><span class="btn" style="background:#f0c138"><svg viewBox="0 0 24 24"><use href="#pen"/></svg></span> <span class="btn" style="background:#f44336"><svg viewBox="0 0 24 24"><use href="#trash"/></svg></span></td></tr>
   <tr style="height:57.2px"><td>3</td><td style="text-align:left"><div class="emp" style="padding-left:23px"><div class="pic p2" style="width:36px;height:36px"></div><div style="margin-left:10px;line-height:13px"><div class="nm" style="font-size:8.5px">Muhammad Racka</div><div style="font-size:8.5px">Customer Service</div></div></div></td><td>03-01-25</td><td style="padding-left:12px">08:00:00</td><td style="padding-left:12px">12:24:00</td><td style="padding-left:13px"><span class="bd" style="background:#f44336">Terlambat</span></td><td><span class="btn" style="background:#f0c138"><svg viewBox="0 0 24 24"><use href="#pen"/></svg></span> <span class="btn" style="background:#f44336"><svg viewBox="0 0 24 24"><use href="#trash"/></svg></span></td></tr>
   <tr style="height:57.2px"><td>4</td><td style="text-align:left"><div class="emp" style="padding-left:23px"><div class="pic p2" style="width:36px;height:36px"></div><div style="margin-left:10px;line-height:13px"><div class="nm" style="font-size:8.5px">Muhammad Racka</div><div style="font-size:8.5px">Customer Service</div></div></div></td><td>02-01-25</td><td style="padding-left:12px">08:00:00</td><td style="padding-left:12px">12:00:00</td><td style="padding-left:13px"><span class="bd" style="background:#6370d6">Tepat Waktu</span></td><td><span class="btn" style="background:#f0c138"><svg viewBox="0 0 24 24"><use href="#pen"/></svg></span> <span class="btn" style="background:#f44336"><svg viewBox="0 0 24 24"><use href="#trash"/></svg></span></td></tr>
   <tr style="height:57.2px"><td>5</td><td style="text-align:left"><div class="emp" style="padding-left:23px"><div class="pic p2" style="width:36px;height:36px"></div><div style="margin-left:10px;line-height:13px"><div class="nm" style="font-size:8.5px">Muhammad Racka</div><div style="font-size:8.5px">Customer Service</div></div></div></td><td>01-01-25</td><td style="padding-left:12px">08:00:00</td><td style="padding-left:12px">12:00:00</td><td style="padding-left:13px"><span class="bd" style="background:#6370d6">Tepat Waktu</span></td><td><span class="btn" style="background:#f0c138"><svg viewBox="0 0 24 24"><use href="#pen"/></svg></span> <span class="btn" style="background:#f44336"><svg viewBox="0 0 24 24"><use href="#trash"/></svg></span></td></tr>
   <tr style="height:57.2px"><td>6</td><td style="text-align:left"><div class="emp" style="padding-left:23px"><div class="pic p2" style="width:36px;height:36px"></div><div style="margin-left:10px;line-height:13px"><div class="nm" style="font-size:8.5px">Muhammad Racka</div><div style="font-size:8.5px">Customer Service</div></div></div></td><td>08-01-25</td><td style="padding-left:12px">08:00:00</td><td style="padding-left:12px">14:38:00</td><td style="padding-left:13px"><span class="bd" style="background:#f44336">Terlambat</span></td><td><span class="btn" style="background:#f0c138"><svg viewBox="0 0 24 24"><use href="#pen"/></svg></span> <span class="btn" style="background:#f44336"><svg viewBox="0 0 24 24"><use href="#trash"/></svg></span></td></tr>
  </table>
  <div class="ft" style="top:441px;right:22px">Records per page:&nbsp;&nbsp;&nbsp;10&nbsp;&nbsp;&nbsp;<span style="font-size:6px">▼</span>&nbsp;&nbsp;&nbsp;&nbsp;&nbsp;1-6 of 6</div>
 </div>
</div>
</div></body></html>
